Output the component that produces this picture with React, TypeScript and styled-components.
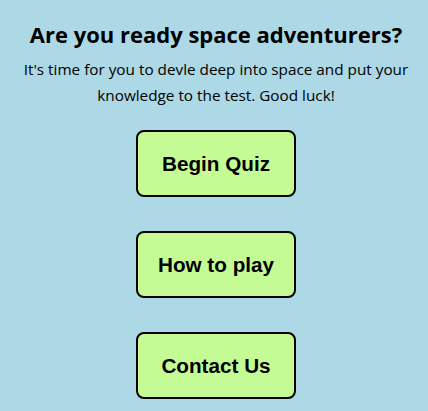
import * as React from "react";
import styled, { createGlobalStyle } from "styled-components";

const GlobalStyle = createGlobalStyle`
  html, body {
    margin: 0;
    padding: 0;
    background-color: #add8e6;
  }
`;

const Page = styled.div`
  min-height: 100vh;
  background-color: #add8e6;
  display: flex;
  flex-direction: column;
  align-items: center;
  padding: 20px 0 0 4px;
  box-sizing: border-box;
`;

const Title = styled.h1`
  margin: 0;
  font-family: "Open Sans", Lato, sans-serif;
  font-weight: 700;
  font-size: 22px;
  line-height: 28px;
  color: #000;
  text-align: center;
`;

const Intro = styled.p`
  margin: 8px 0 0;
  width: 410px;
  font-family: "Open Sans", Lato, sans-serif;
  font-size: 15.3px;
  line-height: 26px;
  color: #000;
  text-align: center;
`;

const Menu = styled.div`
  display: flex;
  flex-direction: column;
  align-items: center;
  gap: 34px;
  margin-top: 22px;
`;

const MenuButton = styled.button`
  width: 160px;
  padding: 20px 0;
  background-color: #c5fb94;
  border: 2px solid #000;
  border-radius: 8px;
  font-family: "Liberation Sans", Arial, sans-serif;
  font-weight: 700;
  font-size: 20.7px;
  line-height: 23px;
  color: #000;
  cursor: pointer;
`;

const App: React.FC = () => {
  return (
    <>
      <GlobalStyle />
      <Page>
        <Title>Are you ready space adventurers?</Title>
        <Intro>
          It's time for you to devle deep into space and put your knowledge to
          the test. Good luck!
        </Intro>
        <Menu>
          <MenuButton>Begin Quiz</MenuButton>
          <MenuButton>How to play</MenuButton>
          <MenuButton>Contact Us</MenuButton>
        </Menu>
      </Page>
    </>
  );
};

export default App;
